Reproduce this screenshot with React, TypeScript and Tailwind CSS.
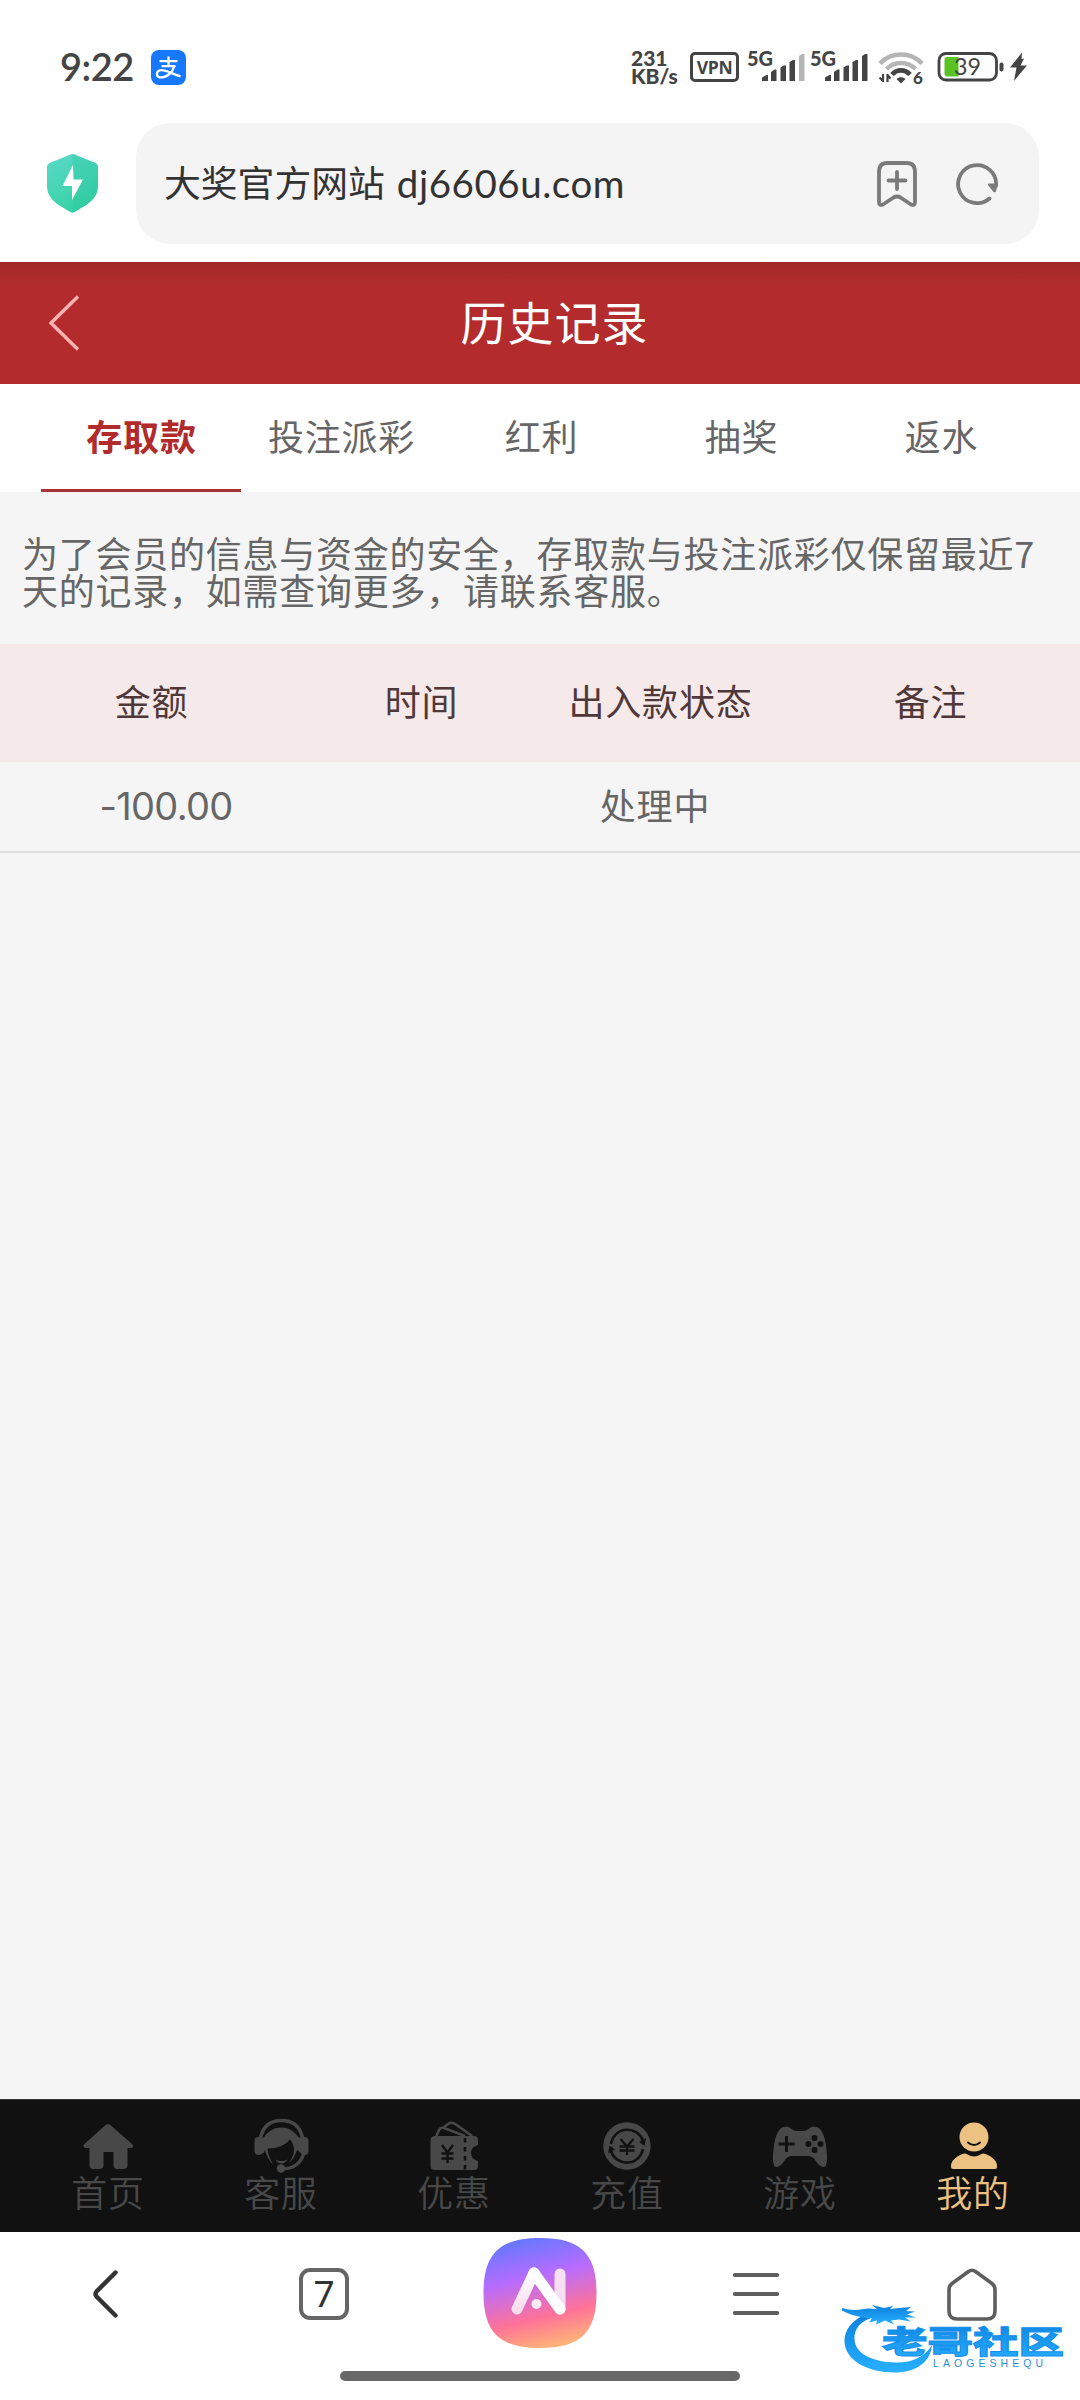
import type { ReactNode } from "react";

const tabs = ["存取款", "投注派彩", "红利", "抽奖", "返水"];

function AlipayIcon() {
  return (
    <svg width="35" height="35" viewBox="0 0 35 35" fill="none" stroke="#fff">
      <rect width="35" height="35" rx="8" fill="#1677ff" stroke="none" />
      <path d="M8.5 11.200h18M17.500 6.500v9.500M10.500 16.200h14" strokeWidth="2.300" />
      <path d="M23.300 16c-1.600 5.200-6.300 11.400-12.600 11.400-3 0-4.800-1.400-4.800-3.500 0-2.200 2-3.800 4.800-3.800 4.600 0 10.300 3.500 18.800 6.200" strokeWidth="2.400" />
    </svg>
  );
}

function SignalIcon({ weak }: { weak?: boolean }) {
  return (
    <svg className="overflow-visible" width="57" height="32" viewBox="0 0 57 32">
      <text x="-1" y="15.500" fontSize="20.500" fontWeight="900" fill="#444" fontFamily="Lato, sans-serif" textLength="26" lengthAdjust="spacingAndGlyphs">5G</text>
      <g fill="#444">
        <path d="M14 31v-3.500l4.500-2.500h1.500v6z" />
        <path d="M23 31v-9l3.500-2.500h2v11.500z" />
        <path d="M32.500 31V17.500l3-2h2.500V31z" />
        <path d="M41.500 31V12l3.500-2h2v21z" />
        <path d="M51 31V6l3-2h2.500v27z" fill={weak ? "#b5b5b5" : "#444"} />
      </g>
    </svg>
  );
}

function WifiIcon() {
  return (
    <svg className="overflow-visible" width="46" height="34" viewBox="0 0 46 34" fill="none">
      <path d="M2 13.500C13 1.500 33 1.500 44 13.500" stroke="#b5b5b5" strokeWidth="4.400" />
      <path d="M8.500 19c8-8 21-8 29 0" stroke="#b5b5b5" strokeWidth="4.400" />
      <path d="M14 24.500c5-5.500 13-5.500 18 0" stroke="#444" strokeWidth="4.800" />
      <path d="M18.500 29c2.500-2.200 6.500-2.200 9 0L23 33.500z" fill="#444" />
      <path d="M5 24v8M5 31l-3.500-3.500M9.500 32v-8M9.500 25l3 3.500" stroke="#444" strokeWidth="2.200" />
      <text x="35" y="33.500" fontSize="17" fontWeight="900" fill="#444" fontFamily="Lato, sans-serif">6</text>
    </svg>
  );
}

function BatteryIcon() {
  return (
    <svg width="92" height="32" viewBox="0 0 92 32">
      <rect x="2" y="3.500" width="57.500" height="26.500" rx="7" fill="none" stroke="#444" strokeWidth="2.800" />
      <path d="M10.500 7h11v19.500h-11a3 3 0 0 1-3-3V10a3 3 0 0 1 3-3z" fill="#58c322" />
      <text x="17" y="25" fontSize="23.500" fill="#444" fontFamily="Lato, sans-serif" textLength="27" lengthAdjust="spacingAndGlyphs">39</text>
      <rect x="62.500" y="12.500" width="4" height="9" rx="2" fill="#444" />
      <path d="M85 2.500L73 17.500h6.500L77 31l13-15.500h-6.500l3.500-7-2.500.500z" fill="#444" />
    </svg>
  );
}

function StatusBar() {
  return (
    <div className="flex h-[123px] items-start pl-[60px] pr-[51px] pt-[50px] text-[#444]">
      <span className="mt-[-1px] w-[91px] font-['Lato'] text-[38px] font-semibold leading-[34px] tracking-[-0.5px]">9:22</span>
      <AlipayIcon />
      <div className="ml-auto flex items-start">
        <div className="mt-[-1px] w-[59px] whitespace-nowrap font-['Lato'] text-[21px] font-black leading-[18px]">
          <div>231</div>
          <div>KB/s</div>
        </div>
        <div className="mt-[2px] flex h-[30px] w-[49px] items-center justify-center rounded-[5px] border-[3px] border-[#444] font-['Open_Sans'] text-[17.500px] font-bold tracking-[-0.300px]">
          VPN
        </div>
        <div className="ml-[9px] flex">
          <SignalIcon weak />
        </div>
        <div className="ml-[6px] flex">
          <SignalIcon />
        </div>
        <div className="ml-[10px] flex">
          <WifiIcon />
        </div>
        <div className="ml-[13px] flex">
          <BatteryIcon />
        </div>
      </div>
    </div>
  );
}

function AddressBar() {
  return (
    <div className="flex h-[139px] items-start pl-[47px] pr-[41px]">
      <svg className="mt-[31px]" width="51" height="59" viewBox="0 0 51 59">
        <defs>
          <linearGradient id="shield" x1="0" y1="0" x2="0.400" y2="1">
            <stop offset="0" stopColor="#5bd9c9" />
            <stop offset="1" stopColor="#38d2a6" />
          </linearGradient>
        </defs>
        <path d="M23.500.600q2-1 4 0L48.500 9q2.500 1 2.500 3.500V32c0 13-11 19-23.500 26q-2 1-4 0C11 51 0 45 0 32V12.500Q0 10 2.500 9z" fill="url(#shield)" />
        <path d="M25.500 0q1 0 2 .600L48.500 9q2.500 1 2.500 3.500V32c0 13-11 19-23.500 26q-1 .600-2 .600z" fill="#18b996" fillOpacity="0.200" />
        <path d="M26 11L15.500 32H25v14l11-20.500h-9.500z" fill="#fff" />
      </svg>
      <div className="ml-[38px] flex h-[121px] flex-1 items-center rounded-[34px] bg-[#f4f4f4] pl-[28px] pr-[41px] text-[#333]">
        <span className="mb-[5px] font-['Noto_Sans_CJK_SC'] text-[36.800px] leading-[54px]">大奖官方网站</span>
        <span className="mb-[2px] ml-[12px] font-['Lato'] text-[38.500px] leading-[54px] tracking-[0.550px]">dj6606u.com</span>
        <svg className="ml-auto" width="40" height="46" viewBox="0 0 40 46" fill="none" stroke="#7a7a7a" strokeWidth="3.800" strokeLinejoin="round" strokeLinecap="round">
          <path d="M10 2h20q8 0 8 9v30q0 4-4 2.500L23.500 36.500Q20 34.500 16.500 36.500L6 43.500Q2 45 2 41V11q0-9 8-9zM20 11v17M11.500 19.500h17" />
        </svg>
        <svg className="ml-[39px]" width="42" height="42" viewBox="0 0 42 42" fill="none">
          <path d="M33.500 35.500A19 19 0 1 1 40 23" stroke="#7a7a7a" strokeWidth="3.800" strokeLinecap="round" />
          <path d="M32.500 20.500h9l-1.500 8q-1.500 1.500-3 0l-5-6.500q-.500-1.500.500-1.500z" fill="#7a7a7a" />
        </svg>
      </div>
    </div>
  );
}

function NavItem({ label, active, children }: { label: string; active?: boolean; children: ReactNode }) {
  return (
    <div className={`flex w-[173px] flex-col items-center ${active ? "text-[#ecc283]" : "text-[#484848]"}`}>
      <svg className="mt-[18px]" width="60" height="55" viewBox="0 0 60 55" fill="currentColor">
        {children}
      </svg>
      <span className="pl-[1px] text-[36px] font-[350] leading-[36px] tracking-[0.800px]">{label}</span>
    </div>
  );
}

function SiteNav() {
  return (
    <nav className="flex h-[133px] justify-center border-t border-[#333] bg-[#111]">
      <NavItem label="首页">
        <path d="M30 6q1.500 0 3 1.500L54 26q1 1 1 2.500t-2 1.500h-3.500v17q0 4-4 4h-6q-4 0-4-4V34h-10v13q0 4-4 4h-6q-4 0-4-4V30H8q-2 0-2.500-1.500t1-2.500L27 7.500Q28.500 6 30 6z" />
      </NavItem>
      <NavItem label="客服">
        <path d="M9.500 20C12 8 20 2.500 30.500 2.500S49 8 51.500 20" fill="none" stroke="currentColor" strokeWidth="3.600" />
        <rect x="3.500" y="19" width="8" height="18" rx="4" />
        <path d="M10 19.500v16q4 0 3.500-4Q17 42 22 46q-5-8-5.500-15.500 15.500 0 22.500-9 3 3 4 9.500Q43 38 38 45q5-4 8-13l4 3V19.500h-2.500C43 12.500 37 9.500 30.500 9.500S17 12.500 13 19.500z" />
        <rect x="49.500" y="19" width="8" height="18" rx="4" />
        <path d="M24 41.500q6.500 3 13 0-6.500 8-13 0z" />
        <path d="M53 35q-5 16-22 16" fill="none" stroke="currentColor" strokeWidth="3.200" />
        <circle cx="30" cy="50.500" r="4.300" />
      </NavItem>
      <NavItem label="优惠">
        <path d="M12 19l3-7q1.500-3 5-2l21 8M19 10l5-4q4-2.500 8 .500L48 18" fill="none" stroke="currentColor" strokeWidth="2.600" />
        <path d="M11 18h39q4 0 4 4v5q-7 2-7 8t7 8v5q0 4-4 4H11q-4.500 0-4.500-4V22.500Q6.500 18 11 18z" />
        <path d="M41 20v32" stroke="#111" strokeWidth="2.600" strokeDasharray="4.500 4.500" />
        <path d="M18 27l5.500 7.500L29 27M17.500 35.500h12M17.500 40.500h12M23.500 34.500V45" fill="none" stroke="#111" strokeWidth="2.400" />
      </NavItem>
      <NavItem label="充值">
        <circle cx="30" cy="28" r="23.700" />
        <g fill="none" stroke="#111" strokeWidth="2.600">
          <path d="M14 26A16.500 16.500 0 0 1 46 23" />
          <path d="M46 31a16.500 16.500 0 0 1-32 2" />
        </g>
        <path d="M42 24l7-4-1.500 8zM18 31.500l-7 4 1.500-8z" fill="#111" />
        <path d="M23.500 21l6.500 7.500 6.500-7.500M22.500 28.500h15M22.500 32.500h15M30 28v9" fill="none" stroke="#111" strokeWidth="2.300" />
      </NavItem>
      <NavItem label="游戏">
        <path d="M13.500 9q4-1.500 8 2 2.500 2 6 2h5q3.500 0 6-2 4-3.500 8-2 6.500 1 9.500 18 3 22-2.500 22-4 0-8-6.500-3-4.500-7-4.500h-17q-4 0-7 4.500-4 6.500-8 6.500-5.500 0-2.500-22 3-17 9.500-18z" />
        <path d="M16.500 18v16M8.500 26h16" stroke="#111" strokeWidth="3" />
        <g fill="#111">
          <circle cx="44.500" cy="20" r="3" />
          <circle cx="38.500" cy="26" r="3" />
          <circle cx="50.500" cy="26" r="3" />
          <circle cx="44.500" cy="32" r="3" />
        </g>
      </NavItem>
      <NavItem label="我的" active>
        <g transform="translate(1 0)">
          <circle cx="30" cy="19" r="14.500" />
          <path d="M24 24.500q6 5 12 0" fill="none" stroke="#111" strokeWidth="2" strokeLinecap="round" />
          <path d="M18.500 36q2.500-1 5 .500 6.500 4 13 0 2.500-1.500 5-.500 6 2 10 7 1.500 2 1.500 6 0 2-2 2H9q-2 0-2-2 0-4 1.500-6 4-5 10-7z" />
        </g>
      </NavItem>
    </nav>
  );
}

function Watermark() {
  return (
    <svg className="absolute left-[840px] top-[66px]" width="226" height="78" viewBox="0 0 226 78">
      <defs>
        <linearGradient id="wm" x1="0" y1="0" x2="0" y2="1">
          <stop offset="0" stopColor="#0b7fdc" />
          <stop offset="1" stopColor="#27b0ff" />
        </linearGradient>
      </defs>
      <g fill="url(#wm)">
        <path d="M29 15C12 21 4 32 4.500 44c1 19 24 30.500 50 30.500 21 0 36-10 37.500-27.500-7 12-20 18-37 17.500C33 64 15 56 14.500 41 14 31 20 23 34 19z" />
        <path d="M2 10q9 3 18 1.500l8-1 9 .500-5-4 12 3 9-2-3 3 9-1 12-1-5 4 9 .500-8 3 9 3-11 0 6 4-12-2-8 1 3 4-9-4-9 4 1-4-8 2 3-4-9-1q-12-2-21-7z" />
      </g>
      <text x="42" y="55" fontSize="31" fontWeight="900" fill="url(#wm)" stroke="#1690ee" strokeWidth="1" fontFamily="Noto Sans CJK SC, sans-serif" textLength="182" lengthAdjust="spacingAndGlyphs">老哥社区</text>
      <text x="93" y="69" fontSize="10.500" fill="#2d8fd8" fontFamily="Liberation Sans, sans-serif" textLength="110">LAOGESHEQU</text>
    </svg>
  );
}

function BrowserBar() {
  return (
    <div className="relative h-[168px] bg-white">
      <div className="grid h-[124px] grid-cols-5 items-center justify-items-center">
        <svg className="mr-[5px]" width="27" height="50" viewBox="0 0 27 50" fill="none">
          <path d="M23.500 3.500L4.500 22.500q-2 2.500 0 5L23.500 46.500" stroke="#333" strokeWidth="4.400" strokeLinecap="round" />
        </svg>
        <div className="flex h-[52px] w-[50px] items-center justify-center rounded-[11px] border-4 border-[#666] pb-[3px] font-['Noto_Sans'] text-[37px] leading-none text-[#333]">7</div>
        <svg width="114" height="112" viewBox="0 0 114 112" fill="none">
          <defs>
            <linearGradient id="ai" x1="0.350" y1="0" x2="0.600" y2="1">
              <stop offset="0" stopColor="#6478ff" />
              <stop offset="0.350" stopColor="#b66cff" />
              <stop offset="0.720" stopColor="#ff7298" />
              <stop offset="1" stopColor="#ffb577" />
            </linearGradient>
            <linearGradient id="leg" x1="0" y1="0" x2="0" y2="1">
              <stop offset="0" stopColor="#fff" />
              <stop offset="1" stopColor="#fbdcec" />
            </linearGradient>
          </defs>
          <path d="M57 0C98 0 113.500 16 113.500 55S98 110 57 110 .500 94 .500 55 16 0 57 0z" fill="url(#ai)" />
          <path d="M34 71L51 35" stroke="url(#leg)" strokeWidth="11" strokeLinecap="round" />
          <path d="M77 36v35" stroke="#f6dff3" strokeWidth="11" strokeLinecap="round" />
          <path d="M51 35L77 71" stroke="#fff" strokeWidth="11" strokeLinecap="round" />
          <circle cx="53.500" cy="66" r="5" fill="#fdeaf4" />
        </svg>
        <svg width="46" height="44" viewBox="0 0 46 44">
          <path d="M2 3h42M2 22h42M2 41h42" stroke="#5e5e5e" strokeWidth="4.200" strokeLinecap="round" />
        </svg>
        <svg width="50" height="53" viewBox="0 0 50 53" fill="none">
          <path d="M21.500 3.500q3.500-2.500 7 0L45 15.500q3 2.500 3 6V43q0 8-8 8H10q-8 0-8-8V21.500q0-3.500 3-6z" stroke="#5e5e5e" strokeWidth="3.600" />
        </svg>
      </div>
      <div className="mx-auto mt-[15px] h-[10px] w-[400px] rounded-full bg-[#686868]" />
      <Watermark />
    </div>
  );
}

export default function App() {
  return (
    <div className="flex h-[2400px] w-[1080px] flex-col overflow-hidden bg-white font-['Noto_Sans_CJK_SC',sans-serif]">
      <StatusBar />
      <AddressBar />
      <header className="grid h-[122px] grid-cols-3 items-center bg-linear-to-b from-[#a32828] to-[#b32b2c] to-20% px-[49px]">
        <svg width="32" height="56" viewBox="0 0 32 56" fill="none">
          <path d="M29 1.500L2 28l27 26.500" stroke="#ffb3b0" strokeWidth="3.400" />
        </svg>
        <h1 className="pb-[6px] pl-[29px] text-center text-[46px] leading-[60px] tracking-[1px] text-white">历史记录</h1>
      </header>
      <div className="flex h-[108px] bg-white pl-[41px]">
        {tabs.map((tab, i) => (
          <button
            key={tab}
            className={`flex w-[200px] items-center justify-center border-b-[3px] pb-[3px] pl-[1px] text-[36px] tracking-[0.800px] ${
              i === 0 ? "border-[#a93438] font-bold text-[#b12b2c]" : "border-transparent text-[#666]"
            }`}
          >
            {tab}
          </button>
        ))}
      </div>
      <main className="flex-1 bg-[#f5f5f5] text-[#666]">
        <p className="h-[152px] whitespace-nowrap pl-[22px] pt-[42px] text-[36px] leading-[37px] tracking-[0.750px]">
          为了会员的信息与资金的安全，存取款与投注派彩仅保留最近7
          <br />
          天的记录，如需查询更多，请联系客服。
        </p>
        <div className="grid h-[118px] grid-cols-[303px_237px_241px_299px] items-center justify-items-center bg-[#f5e9e9] pb-[7px] text-[36px] tracking-[0.800px] text-[#4f3839]">
          <span>金额</span>
          <span>时间</span>
          <span>出入款状态</span>
          <span>备注</span>
        </div>
        <div className="grid h-[91px] grid-cols-[332px_208px_230px_310px] items-center justify-items-center border-b-2 border-[#e0e0e0] pb-[5px] text-[36px] tracking-[0.800px]">
          <span className="pt-[5px] font-['Inter'] text-[38px] tracking-[-0.700px]">-100.00</span>
          <span />
          <span>处理中</span>
          <span />
        </div>
      </main>
      <SiteNav />
      <BrowserBar />
    </div>
  );
}
